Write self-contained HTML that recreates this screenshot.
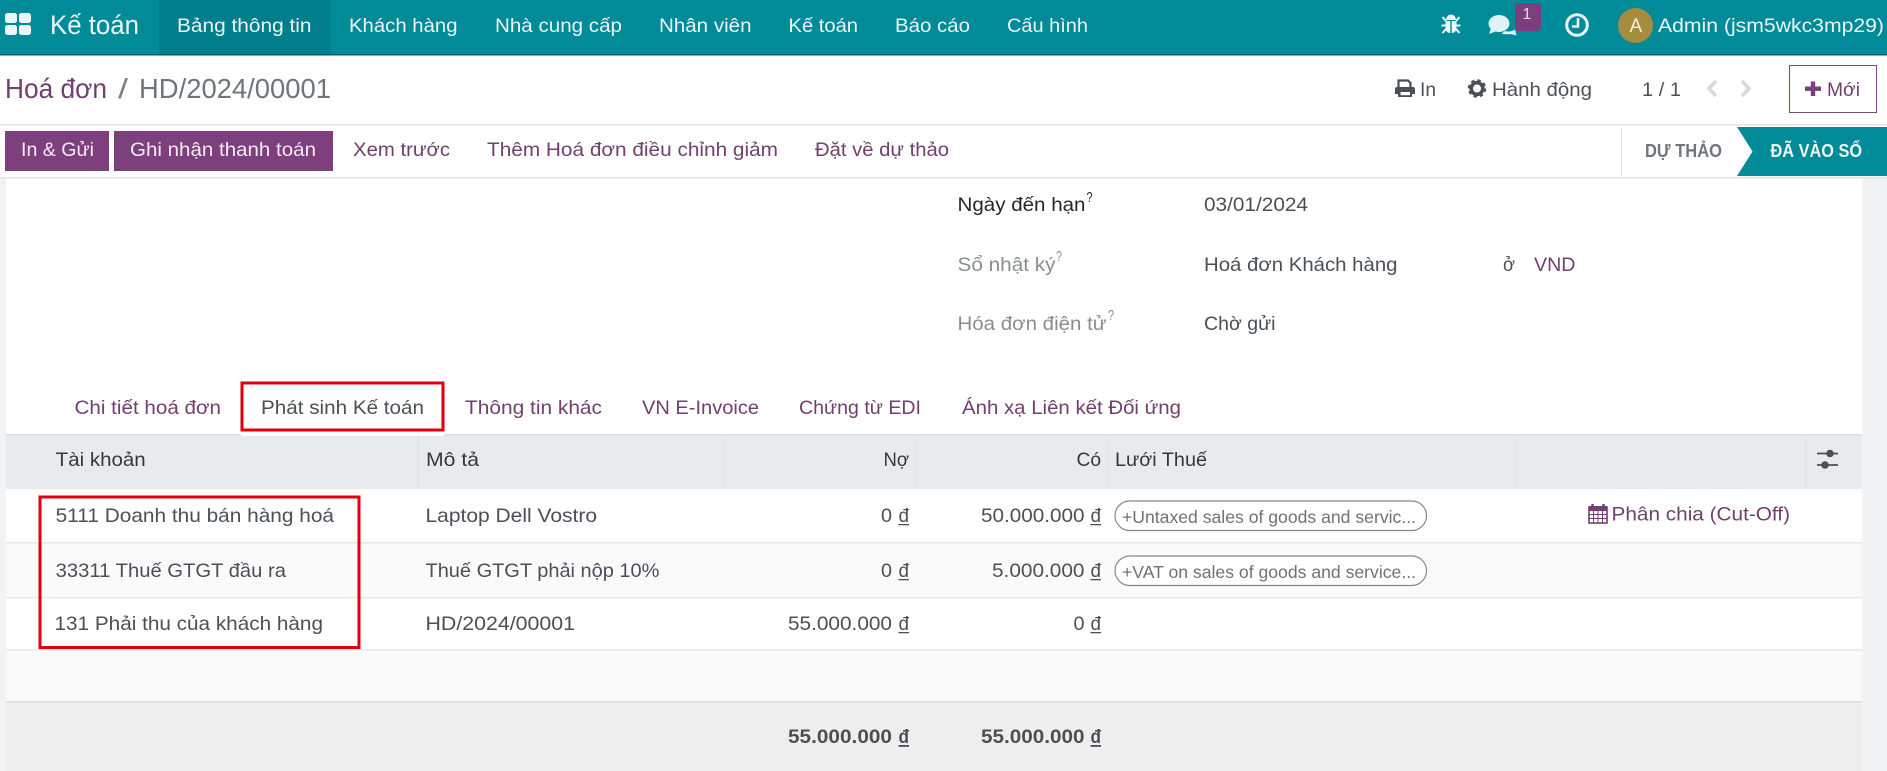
<!DOCTYPE html>
<html lang="vi">
<head>
<meta charset="utf-8">
<title>Hoá đơn HD/2024/00001</title>
<style>
html,body{margin:0;padding:0;background:#fff;overflow:hidden}
svg{display:block}
text{font-family:"Liberation Sans",sans-serif;font-size:19.5px;fill:#4a5056;white-space:pre}
.nav{fill:#eaf6f7}
.pur{fill:#71406f}
.w{fill:#f3ecf3}
.gr{fill:#8a8d90}
.dk{fill:#23272b}
.b{font-weight:bold}
.tag{font-size:17.5px;fill:#6f7276}
</style>
</head>
<body>
<svg xmlns="http://www.w3.org/2000/svg" width="1887" height="771" viewBox="0 0 1887 771">
<rect width="1887" height="771" fill="#fff"/>
<!-- side gutters -->
<rect x="0" y="178" width="6" height="593" fill="#f1f3f4"/>
<rect x="1862" y="178" width="25" height="593" fill="#f1f3f4"/>

<!-- navbar -->
<rect width="1887" height="54" fill="#018a98"/>
<rect y="54" width="1887" height="1.5" fill="#0d5f66"/>
<rect x="159" width="171" height="54" fill="#017e8b"/>
<g fill="#eaf6f7">
<rect x="5" y="13" width="12" height="10" rx="2.5"/><rect x="19" y="13" width="12" height="10" rx="2.5"/>
<rect x="5" y="25" width="12" height="10" rx="2.5"/><rect x="19" y="25" width="12" height="10" rx="2.5"/>
</g>
<text class="nav" x="50" y="34" style="font-size:27px" textLength="89" lengthAdjust="spacingAndGlyphs">Kế toán</text>
<text class="nav" x="177" y="32" textLength="134.5" lengthAdjust="spacingAndGlyphs">Bảng thông tin</text>
<text class="nav" x="349" y="32" textLength="108.5" lengthAdjust="spacingAndGlyphs">Khách hàng</text>
<text class="nav" x="495" y="32" textLength="127" lengthAdjust="spacingAndGlyphs">Nhà cung cấp</text>
<text class="nav" x="659" y="32" textLength="92.5" lengthAdjust="spacingAndGlyphs">Nhân viên</text>
<text class="nav" x="788.5" y="32" textLength="69.5" lengthAdjust="spacingAndGlyphs">Kế toán</text>
<text class="nav" x="895" y="32" textLength="75" lengthAdjust="spacingAndGlyphs">Báo cáo</text>
<text class="nav" x="1007" y="32" textLength="81" lengthAdjust="spacingAndGlyphs">Cấu hình</text>

<!-- bug -->
<g fill="#eaf6f7">
<path d="M1446 20a5 5.500 0 0 1 10 0z"/>
<path d="M1445.500 21h4.800v12c-2.800 0-4.800-2-4.800-5zM1451.700 21h4.800v7c0 3-2 5-4.800 5z"/>
</g>
<path d="M1442.500 17l3.500 4M1459.500 17l-3.500 4M1441.500 25.500h4M1460.500 25.500h-4M1442.500 33l3.500-4M1459.500 33l-3.500-4" stroke="#eaf6f7" stroke-width="2" fill="none"/>
<!-- comments -->
<path d="M1505 31c3 1 7 .5 10-1.500l1.500 6-6-1.500c-2 .5-6 .5-9-.5z" fill="#dff3f4"/>
<ellipse cx="1499" cy="23.500" rx="10.500" ry="8.500" fill="#dff3f4"/>
<path d="M1491 28l-2 6 8-3z" fill="#dff3f4"/>
<rect x="1515" y="3" width="26" height="28" rx="4" fill="#7c3e7d"/>
<text x="1522.500" y="19" style="font-size:16px;fill:#e8dbe8">1</text>
<!-- clock -->
<circle cx="1577" cy="25" r="10.300" fill="none" stroke="#eaf6f7" stroke-width="3"/>
<path d="M1578 18v8.500h-6" fill="none" stroke="#eaf6f7" stroke-width="2.600"/>
<!-- avatar -->
<circle cx="1635.500" cy="25.500" r="17.500" fill="#a78c3d"/>
<text x="1629.500" y="32" style="font-size:19px;fill:#f6f1e2">A</text>
<text class="nav" x="1658" y="32" textLength="226" lengthAdjust="spacingAndGlyphs">Admin (jsm5wkc3mp29)</text>

<!-- control panel -->
<text class="pur" x="5" y="98" style="font-size:28px" textLength="102" lengthAdjust="spacingAndGlyphs">Hoá đơn</text>
<text x="118" y="98" style="font-size:28px;fill:#7d8287" textLength="10" lengthAdjust="spacingAndGlyphs">/</text>
<text x="139" y="98" style="font-size:28px;fill:#6e757c" textLength="192" lengthAdjust="spacingAndGlyphs">HD/2024/00001</text>

<!-- printer -->
<path d="M1398.500 88v-7.500h9.500l2.500 2.500v5" fill="none" stroke="#4a5056" stroke-width="2.200"/>
<path d="M1397 87h16a2 2 0 0 1 2 2v5h-3v3h-14v-3h-3v-5a2 2 0 0 1 2-2z" fill="#4a5056"/>
<rect x="1400.500" y="92" width="9.500" height="3.200" fill="#fff"/>
<text x="1420" y="96" textLength="16" lengthAdjust="spacingAndGlyphs">In</text>
<!-- gear -->
<circle cx="1477" cy="88.500" r="5.800" fill="none" stroke="#4a5056" stroke-width="3.600"/>
<circle cx="1477" cy="88.500" r="8" fill="none" stroke="#4a5056" stroke-width="2.500" stroke-dasharray="3.300 3"/>
<text x="1492" y="96" textLength="100" lengthAdjust="spacingAndGlyphs">Hành động</text>
<text x="1642" y="96" textLength="39" lengthAdjust="spacingAndGlyphs">1 / 1</text>
<path d="M1716 81l-7 7.500 7 7.500" fill="none" stroke="#d8d9da" stroke-width="3.600"/>
<path d="M1742 81l7 7.500-7 7.500" fill="none" stroke="#d8d9da" stroke-width="3.600"/>
<rect x="1789.500" y="65.500" width="87" height="47" fill="#fff" stroke="#7c4a7c"/>
<path d="M1805 88.700h16M1813 81.500v14.500" stroke="#7c3e7d" stroke-width="4.400" fill="none"/>
<text class="pur" x="1827" y="96" textLength="33" lengthAdjust="spacingAndGlyphs">Mới</text>

<rect y="124" width="1887" height="1.500" fill="#e1e3e5"/>
<rect y="177" width="1887" height="1.500" fill="#e1e3e5"/>

<!-- status bar buttons -->
<rect x="5" y="131" width="104" height="40" fill="#7e3f7d"/>
<rect x="114" y="131" width="219" height="40" fill="#7e3f7d"/>
<text class="w" x="21" y="156" textLength="73" lengthAdjust="spacingAndGlyphs">In &amp; Gửi</text>
<text class="w" x="130" y="156" textLength="186" lengthAdjust="spacingAndGlyphs">Ghi nhận thanh toán</text>
<text class="pur" x="353" y="156" textLength="97" lengthAdjust="spacingAndGlyphs">Xem trước</text>
<text class="pur" x="487" y="156" textLength="291" lengthAdjust="spacingAndGlyphs">Thêm Hoá đơn điều chỉnh giảm</text>
<text class="pur" x="815" y="156" textLength="134" lengthAdjust="spacingAndGlyphs">Đặt về dự thảo</text>
<rect x="1621" y="127" width="1" height="49" fill="#e1e3e5"/>
<text class="b" x="1645" y="157" style="font-size:18px;fill:#6e757c" textLength="77" lengthAdjust="spacingAndGlyphs">DỰ THẢO</text>
<polygon points="1737,127 1887,127 1887,176 1737,176 1752.500,151.500" fill="#018a98"/>
<text class="b" x="1770.500" y="157" style="font-size:18px;fill:#eef8f9" textLength="91.500" lengthAdjust="spacingAndGlyphs">ĐÃ VÀO SỔ</text>

<!-- fields -->
<text class="dk" x="957.500" y="211" textLength="128" lengthAdjust="spacingAndGlyphs">Ngày đến hạn</text>
<text class="dk" x="1086.500" y="202" style="font-size:15px" textLength="6" lengthAdjust="spacingAndGlyphs">?</text>
<text x="1204" y="211" textLength="104" lengthAdjust="spacingAndGlyphs">03/01/2024</text>
<text class="gr" x="957.500" y="271" textLength="98" lengthAdjust="spacingAndGlyphs">Sổ nhật ký</text>
<text class="gr" x="1056" y="261" style="font-size:15px" textLength="6" lengthAdjust="spacingAndGlyphs">?</text>
<text x="1204" y="271" textLength="193.500" lengthAdjust="spacingAndGlyphs">Hoá đơn Khách hàng</text>
<text x="1503" y="271" textLength="12" lengthAdjust="spacingAndGlyphs">ở</text>
<text class="pur" x="1534" y="271" textLength="41.500" lengthAdjust="spacingAndGlyphs">VND</text>
<text class="gr" x="957.500" y="330" textLength="149" lengthAdjust="spacingAndGlyphs">Hóa đơn điện tử</text>
<text class="gr" x="1108" y="320" style="font-size:15px" textLength="6" lengthAdjust="spacingAndGlyphs">?</text>
<text x="1204" y="330" textLength="71.500" lengthAdjust="spacingAndGlyphs">Chờ gửi</text>

<!-- tabs -->
<text class="pur" x="74.500" y="414" textLength="146.500" lengthAdjust="spacingAndGlyphs">Chi tiết hoá đơn</text>
<text x="261" y="414" textLength="163" lengthAdjust="spacingAndGlyphs">Phát sinh Kế toán</text>
<text class="pur" x="465" y="414" textLength="137" lengthAdjust="spacingAndGlyphs">Thông tin khác</text>
<text class="pur" x="642" y="414" textLength="117" lengthAdjust="spacingAndGlyphs">VN E-Invoice</text>
<text class="pur" x="799" y="414" textLength="122" lengthAdjust="spacingAndGlyphs">Chứng từ EDI</text>
<text class="pur" x="962" y="414" textLength="219" lengthAdjust="spacingAndGlyphs">Ánh xạ Liên kết Đối ứng</text>

<!-- table header -->
<rect x="6" y="435" width="1856" height="54" fill="#e8ebee"/>
<rect x="6" y="434" width="1856" height="1.500" fill="#dcdfe2"/>
<rect x="241" y="432" width="203" height="4" fill="#fff"/>
<g fill="#dfe2e6">
<rect x="418" y="435" width="1" height="54"/><rect x="723" y="435" width="1" height="54"/>
<rect x="915" y="435" width="1" height="54"/><rect x="1107" y="435" width="1" height="54"/>
<rect x="1515" y="435" width="1" height="54"/><rect x="1805" y="435" width="1" height="54"/>
</g>
<text class="dk" x="55.700" y="466" style="fill:#33383d" textLength="90" lengthAdjust="spacingAndGlyphs">Tài khoản</text>
<text class="dk" x="426" y="466" style="fill:#33383d" textLength="53" lengthAdjust="spacingAndGlyphs">Mô tả</text>
<text class="dk" x="883.500" y="466" style="fill:#33383d" textLength="25.500" lengthAdjust="spacingAndGlyphs">Nợ</text>
<text class="dk" x="1076.500" y="466" style="fill:#33383d" textLength="24.500" lengthAdjust="spacingAndGlyphs">Có</text>
<text class="dk" x="1115" y="466" style="fill:#33383d" textLength="92" lengthAdjust="spacingAndGlyphs">Lưới Thuế</text>
<path d="M1817 453.500h21M1817 465h21" stroke="#4a5056" stroke-width="1.800"/>
<circle cx="1830" cy="453.500" r="3.800" fill="#4a5056"/><circle cx="1825" cy="465" r="3.800" fill="#4a5056"/>

<!-- rows -->
<rect x="6" y="543" width="1856" height="54" fill="#fafafa"/>
<rect x="6" y="650" width="1856" height="52" fill="#fafafa"/>
<g fill="#e6e8ea">
<rect x="6" y="542" width="1856" height="1.500"/><rect x="6" y="597" width="1856" height="1.500"/>
<rect x="6" y="649" width="1856" height="1.500"/>
</g>
<rect x="6" y="701" width="1856" height="2.500" fill="#dfe1e3"/>
<rect x="6" y="703" width="1856" height="68" fill="#eeeeee"/>

<text x="55.700" y="522" textLength="278.300" lengthAdjust="spacingAndGlyphs">5111 Doanh thu bán hàng hoá</text>
<text x="425.500" y="522" textLength="171.500" lengthAdjust="spacingAndGlyphs">Laptop Dell Vostro</text>
<text x="881" y="522" textLength="11" lengthAdjust="spacingAndGlyphs">0</text>
<text x="898.500" y="522" textLength="10.500" lengthAdjust="spacingAndGlyphs">đ</text><rect x="898.500" y="524" width="10.500" height="1.300" fill="#4a5056"/>
<text x="981" y="522" textLength="103.500" lengthAdjust="spacingAndGlyphs">50.000.000</text>
<text x="1090.500" y="522" textLength="10.500" lengthAdjust="spacingAndGlyphs">đ</text><rect x="1090.500" y="524" width="10.500" height="1.300" fill="#4a5056"/>
<rect x="1115" y="501" width="311.500" height="29.500" rx="14.700" fill="#fff" stroke="#85888b" stroke-width="1.200"/>
<text class="tag" x="1122" y="523" textLength="294" lengthAdjust="spacingAndGlyphs">+Untaxed sales of goods and servic...</text>
<!-- calendar -->
<rect x="1589" y="507" width="18" height="16" fill="none" stroke="#71406f" stroke-width="1.600"/>
<rect x="1589" y="506" width="18" height="5" fill="#71406f"/>
<path d="M1592.500 504v4M1603.500 504v4" stroke="#71406f" stroke-width="2.400"/>
<path d="M1593.500 511v12M1598 511v12M1602.500 511v12M1589 514.500h18M1589 518.500h18" stroke="#71406f" stroke-width="1"/>
<text class="pur" x="1611.500" y="520.500" textLength="178.500" lengthAdjust="spacingAndGlyphs">Phân chia (Cut-Off)</text>

<text x="55.700" y="577" textLength="230.300" lengthAdjust="spacingAndGlyphs">33311 Thuế GTGT đầu ra</text>
<text x="425.500" y="577" textLength="233.900" lengthAdjust="spacingAndGlyphs">Thuế GTGT phải nộp 10%</text>
<text x="881" y="577" textLength="11" lengthAdjust="spacingAndGlyphs">0</text>
<text x="898.500" y="577" textLength="10.500" lengthAdjust="spacingAndGlyphs">đ</text><rect x="898.500" y="579" width="10.500" height="1.300" fill="#4a5056"/>
<text x="992" y="577" textLength="92.500" lengthAdjust="spacingAndGlyphs">5.000.000</text>
<text x="1090.500" y="577" textLength="10.500" lengthAdjust="spacingAndGlyphs">đ</text><rect x="1090.500" y="579" width="10.500" height="1.300" fill="#4a5056"/>
<rect x="1115" y="556" width="311.500" height="29.500" rx="14.700" fill="#fff" stroke="#85888b" stroke-width="1.200"/>
<text class="tag" x="1122" y="578" textLength="294" lengthAdjust="spacingAndGlyphs">+VAT on sales of goods and service...</text>

<text x="54.500" y="630" textLength="268.500" lengthAdjust="spacingAndGlyphs">131 Phải thu của khách hàng</text>
<text x="425.500" y="630" textLength="149.500" lengthAdjust="spacingAndGlyphs">HD/2024/00001</text>
<text x="788" y="630" textLength="104" lengthAdjust="spacingAndGlyphs">55.000.000</text>
<text x="898.500" y="630" textLength="10.500" lengthAdjust="spacingAndGlyphs">đ</text><rect x="898.500" y="632" width="10.500" height="1.300" fill="#4a5056"/>
<text x="1073.500" y="630" textLength="11" lengthAdjust="spacingAndGlyphs">0</text>
<text x="1090.500" y="630" textLength="10.500" lengthAdjust="spacingAndGlyphs">đ</text><rect x="1090.500" y="632" width="10.500" height="1.300" fill="#4a5056"/>

<text class="b" x="788" y="743" textLength="104" lengthAdjust="spacingAndGlyphs">55.000.000</text>
<text class="b" x="898.500" y="743" textLength="10.500" lengthAdjust="spacingAndGlyphs">đ</text><rect x="898.500" y="745" width="10.500" height="1.800" fill="#4a5056"/>
<text class="b" x="981" y="743" textLength="103.500" lengthAdjust="spacingAndGlyphs">55.000.000</text>
<text class="b" x="1090.500" y="743" textLength="10.500" lengthAdjust="spacingAndGlyphs">đ</text><rect x="1090.500" y="745" width="10.500" height="1.800" fill="#4a5056"/>

<!-- red highlight boxes -->
<rect x="242" y="383" width="201" height="47" fill="none" stroke="#e0000d" stroke-width="3"/>
<rect x="40" y="497" width="319" height="150.500" fill="none" stroke="#e0000d" stroke-width="3"/>
</svg>
</body>
</html>
